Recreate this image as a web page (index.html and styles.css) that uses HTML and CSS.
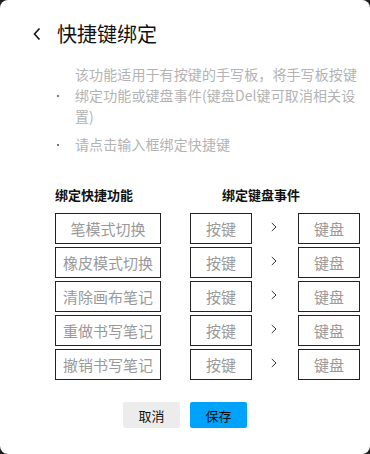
FILE: index.html
```html
<!DOCTYPE html>
<html lang="zh-CN">
<head>
    <meta charset="UTF-8">
    <title>快捷键绑定</title>
    <link rel="stylesheet" href="styles.css">
</head>
<body>
    <div class="dialog">
        <div class="header">
            <span class="back">
                <svg width="10" height="14" viewBox="0 0 10 14"><path d="M7.5 1.5 L2.5 7 L7.5 12.5" fill="none" stroke="#111" stroke-width="1.6"/></svg>
            </span>
            <span class="title">快捷键绑定</span>
        </div>

        <div class="tips">
            <div class="tip">
                <span class="dot"></span>
                <p>该功能适用于有按键的手写板，将手写板按键绑定功能或键盘事件(键盘Del键可取消相关设置)</p>
            </div>
            <div class="tip">
                <span class="dot"></span>
                <p>请点击输入框绑定快捷键</p>
            </div>
        </div>

        <div class="bind-head">
            <span class="col-func">绑定快捷功能</span>
            <span class="col-key">绑定键盘事件</span>
        </div>

        <div class="bind-list">
            <div class="bind-row">
                <div class="box func">笔模式切换</div>
                <div class="box key">按键</div>
                <span class="arrow"><svg width="6" height="10" viewBox="0 0 6 10"><path d="M0.8 1 L5 5 L0.8 9" fill="none" stroke="#333" stroke-width="1"/></svg></span>
                <div class="box key">键盘</div>
            </div>
            <div class="bind-row">
                <div class="box func">橡皮模式切换</div>
                <div class="box key">按键</div>
                <span class="arrow"><svg width="6" height="10" viewBox="0 0 6 10"><path d="M0.8 1 L5 5 L0.8 9" fill="none" stroke="#333" stroke-width="1"/></svg></span>
                <div class="box key">键盘</div>
            </div>
            <div class="bind-row">
                <div class="box func">清除画布笔记</div>
                <div class="box key">按键</div>
                <span class="arrow"><svg width="6" height="10" viewBox="0 0 6 10"><path d="M0.8 1 L5 5 L0.8 9" fill="none" stroke="#333" stroke-width="1"/></svg></span>
                <div class="box key">键盘</div>
            </div>
            <div class="bind-row">
                <div class="box func">重做书写笔记</div>
                <div class="box key">按键</div>
                <span class="arrow"><svg width="6" height="10" viewBox="0 0 6 10"><path d="M0.8 1 L5 5 L0.8 9" fill="none" stroke="#333" stroke-width="1"/></svg></span>
                <div class="box key">键盘</div>
            </div>
            <div class="bind-row">
                <div class="box func">撤销书写笔记</div>
                <div class="box key">按键</div>
                <span class="arrow"><svg width="6" height="10" viewBox="0 0 6 10"><path d="M0.8 1 L5 5 L0.8 9" fill="none" stroke="#333" stroke-width="1"/></svg></span>
                <div class="box key">键盘</div>
            </div>
        </div>

        <div class="actions">
            <button class="btn cancel">取消</button>
            <button class="btn save">保存</button>
        </div>
    </div>
</body>
</html>
```

FILE: styles.css
```css
body {
    margin: 0;
    background-color: #1e1e1e;
    font-family: "Noto Sans CJK SC", "Microsoft YaHei", sans-serif;
}
.dialog {
    width: 370px;
    height: 454px;
    background-color: #fff;
    border-radius: 8px;
    box-sizing: border-box;
    padding-top: 20px;
}
.header {
    display: flex;
    align-items: center;
    height: 28px;
    padding-left: 32px;
}
.back {
    display: flex;
    width: 10px;
}
.title {
    margin-left: 15px;
    font-size: 20px;
    color: #111;
    line-height: 28px;
}
.tips {
    margin-top: 16px;
    padding-left: 57px;
    padding-right: 12px;
}
.tip {
    display: flex;
    align-items: center;
    margin-bottom: 7px;
}
.tip p {
    flex: 1;
    margin: 0;
    font-size: 14px;
    line-height: 21px;
    color: #b3b3b3;
    letter-spacing: 0.1px;
}
.dot {
    width: 2px;
    height: 2px;
    background-color: #777;
    margin-right: 16px;
}
.bind-head {
    display: flex;
    margin-top: 31px;
    padding-left: 55px;
    font-size: 13px;
    font-weight: bold;
    color: #111;
    line-height: 18px;
}
.col-func {
    width: 167px;
}
.bind-list {
    margin-top: 9px;
    padding-left: 55px;
}
.bind-row {
    display: flex;
    align-items: center;
    margin-bottom: 3px;
}
.box {
    height: 31px;
    box-sizing: border-box;
    border: 1px solid #222;
    display: flex;
    align-items: center;
    justify-content: center;
    font-size: 15px;
    color: #999;
}
.func {
    width: 106px;
}
.key {
    width: 62px;
}
.func + .key {
    margin-left: 29px;
}
.arrow {
    width: 46px;
    display: flex;
    justify-content: center;
    padding-right: 2px;
    padding-bottom: 4px;
    box-sizing: border-box;
}
.actions {
    display: flex;
    justify-content: center;
    gap: 10px;
    margin-top: 22px;
}
.btn {
    width: 57px;
    height: 26px;
    border: none;
    border-radius: 2px;
    font-family: inherit;
    font-size: 13px;
    color: #111;
    padding: 0;
}
.cancel {
    background-color: #ececec;
}
.save {
    background-color: #00a3fb;
}
```
